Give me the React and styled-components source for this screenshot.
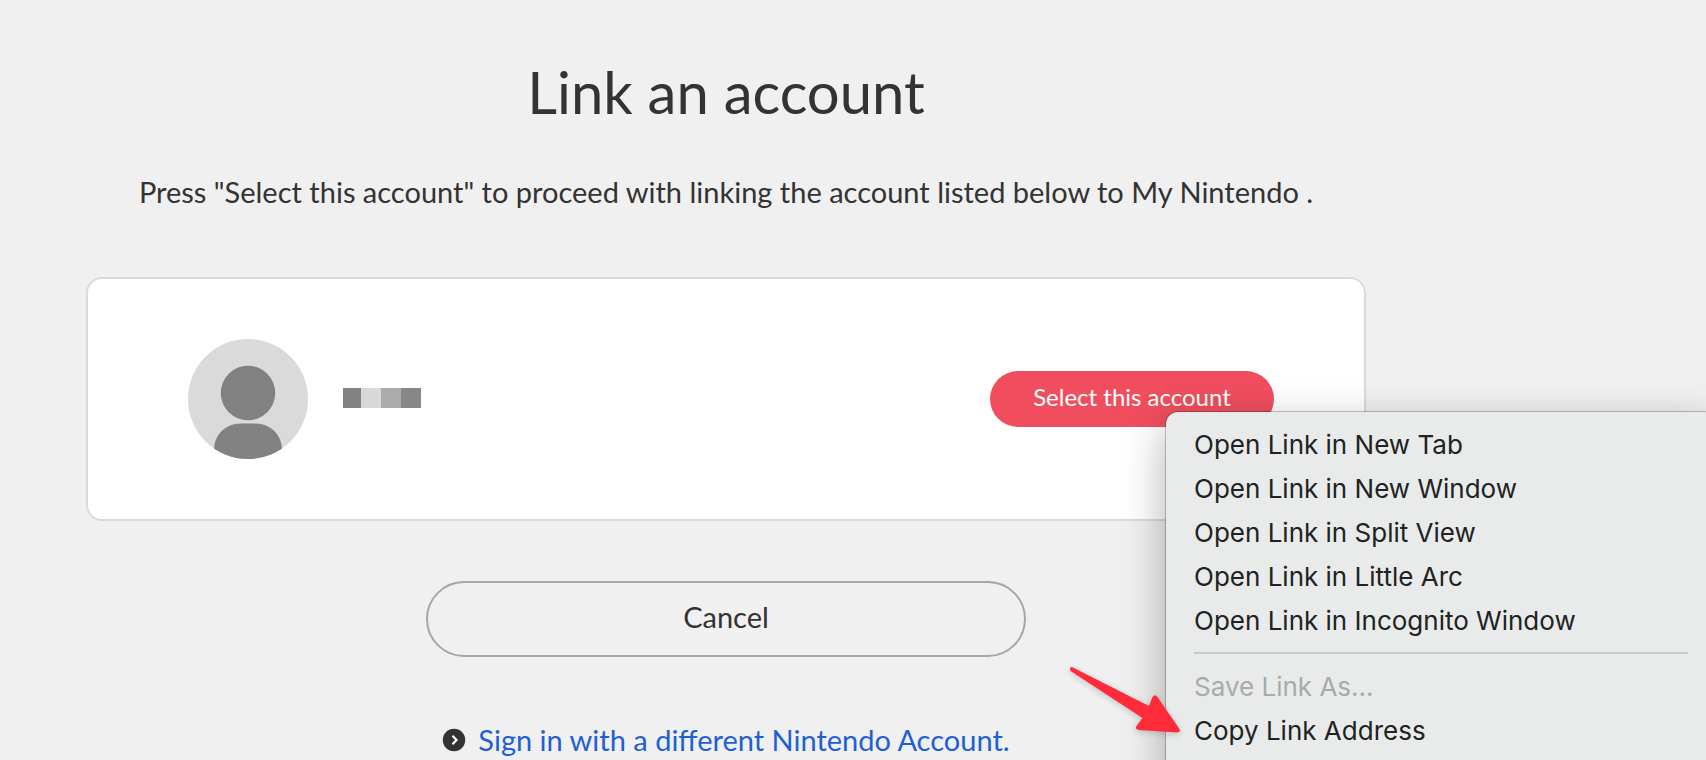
import React from "react";
import styled, { createGlobalStyle } from "styled-components";

const GlobalStyle = createGlobalStyle`
  *, *::before, *::after { box-sizing: border-box; }
  body {
    margin: 0;
    background: #f0f0f0;
    color: #333333;
    font-family: Lato, "Open Sans", sans-serif;
    font-size: 29px;
    line-height: 40px;
  }
`;

const Page = styled.main`
  display: flex;
  flex-direction: column;
  align-items: center;
  min-height: 100vh;
  padding: 54px 340px 0 86px;
  overflow: hidden;
`;

const Title = styled.h1`
  margin: 0;
  font-size: 58px;
  font-weight: 400;
  line-height: 76px;
  white-space: nowrap;
`;

const Lead = styled.p`
  margin: 42px 0 0;
  white-space: nowrap;
`;

const Card = styled.section`
  display: flex;
  align-items: center;
  align-self: stretch;
  height: 244px;
  margin-top: 65px;
  padding: 0 90px 0 100px;
  background: #ffffff;
  border: 2px solid #dadada;
  border-radius: 16px;
`;

const Avatar = styled.svg`
  flex: none;
  width: 120px;
  height: 120px;
`;

const Mosaic = styled.div`
  display: flex;
  margin-left: 35px;
  padding-bottom: 2px;
`;

const Tile = styled.span`
  width: ${(p) => (p.$narrow ? 18 : 20)}px;
  height: 20px;
  background: ${(p) => p.$tone};
`;

const SelectWrap = styled.div`
  position: relative;
  margin-left: auto;
`;

const SelectLink = styled.a`
  display: flex;
  align-items: center;
  justify-content: center;
  width: 284px;
  height: 56px;
  padding-bottom: 4px;
  border-radius: 28px;
  background: #f04e5e;
  color: #ffffff;
  font-size: 24px;
  text-decoration: none;
  white-space: nowrap;
`;

const CancelButton = styled.button`
  width: 600px;
  height: 76px;
  margin-top: 60px;
  padding: 0 0 4px;
  border: 2px solid #a6a6a6;
  border-radius: 38px;
  background: transparent;
  color: inherit;
  font: inherit;
`;

const SignInRow = styled.a`
  display: flex;
  align-items: center;
  gap: 12px;
  margin-top: 63px;
  color: #1f5fd6;
  text-decoration: none;
  white-space: nowrap;

  svg { flex: none; width: 24px; height: 24px; }
`;

const Menu = styled.div`
  position: absolute;
  z-index: 1;
  top: 41px;
  left: 176px;
  width: 550px;
  padding: 11px 28px 60px;
  border-radius: 12px;
  background: #e8ebea;
  box-shadow: 0 0 0 1px rgba(0, 0, 0, 0.22), 0 14px 44px rgba(0, 0, 0, 0.32);
`;

const MenuItem = styled.button`
  display: block;
  width: 100%;
  height: 44px;
  padding: 0;
  border: 0;
  background: transparent;
  color: ${(p) => (p.disabled ? "#a9abaa" : "#212222")};
  font-family: Inter, sans-serif;
  font-size: 26px;
  line-height: 44px;
  text-align: left;
  white-space: nowrap;
`;

const Separator = styled.hr`
  height: 2px;
  margin: 9px 0 11px;
  border: 0;
  background: #cacccb;
`;

const Pointer = styled.svg`
  position: absolute;
  top: 248px;
  left: -104px;
  width: 126px;
  height: 84px;
  pointer-events: none;
  filter: drop-shadow(0 2px 3px rgba(0, 0, 0, 0.18));
`;

const tones = ["#828282", "#d8d8d8", "#ababab", "#878787"];

const linkActions = [
  "Open Link in New Tab",
  "Open Link in New Window",
  "Open Link in Split View",
  "Open Link in Little Arc",
  "Open Link in Incognito Window",
];

function ContextMenu() {
  return (
    <Menu role="menu" aria-label="Link actions">
      {linkActions.map((label) => (
        <MenuItem key={label} type="button" role="menuitem">{label}</MenuItem>
      ))}
      <Separator />
      <MenuItem type="button" role="menuitem" disabled>Save Link As...</MenuItem>
      <MenuItem type="button" role="menuitem">Copy Link Address</MenuItem>
      <Pointer viewBox="0 0 126 84" aria-hidden="true">
        <path
          d="M10.5 7.2 L87 46 L90.5 37 Q93 33.500 95.500 37 L117.500 69 Q119 72 115.500 72.500 L76.500 70 Q72.500 69 74.500 66 L80.500 58 L8.500 11 Q6.800 6.500 10.500 7.200 Z"
          fill="#ff2b3a"
        />
      </Pointer>
    </Menu>
  );
}

export default function App() {
  return (
    <>
      <GlobalStyle />
      <Page>
        <Title>Link an account</Title>
        <Lead>
          Press "Select this account" to proceed with linking the account listed below to My Nintendo .
        </Lead>
        <Card>
          <Avatar viewBox="0 0 120 120" aria-hidden="true">
            <defs>
              <clipPath id="avatar-clip"><circle cx="60" cy="60" r="60" /></clipPath>
            </defs>
            <g clipPath="url(#avatar-clip)">
              <rect width="120" height="120" fill="#dadada" />
              <circle cx="60" cy="54" r="27.200" fill="#818181" />
              <rect x="26" y="84.500" width="68" height="60" rx="26" fill="#818181" />
            </g>
          </Avatar>
          <Mosaic aria-hidden="true">
            {tones.map((tone, i) => <Tile key={tone} $tone={tone} $narrow={i === 0} />)}
          </Mosaic>
          <SelectWrap>
            <SelectLink href="#select">Select this account</SelectLink>
            <ContextMenu />
          </SelectWrap>
        </Card>
        <CancelButton type="button">Cancel</CancelButton>
        <SignInRow href="#signin">
          <svg viewBox="0 0 24 24" aria-hidden="true">
            <circle cx="12" cy="12" r="11.200" fill="#333333" />
            <path d="M10.500 7.700 L14.500 12 L10.500 16.300" fill="none" stroke="#ffffff" strokeWidth="2.200" />
          </svg>
          Sign in with a different Nintendo Account.
        </SignInRow>
      </Page>
    </>
  );
}
